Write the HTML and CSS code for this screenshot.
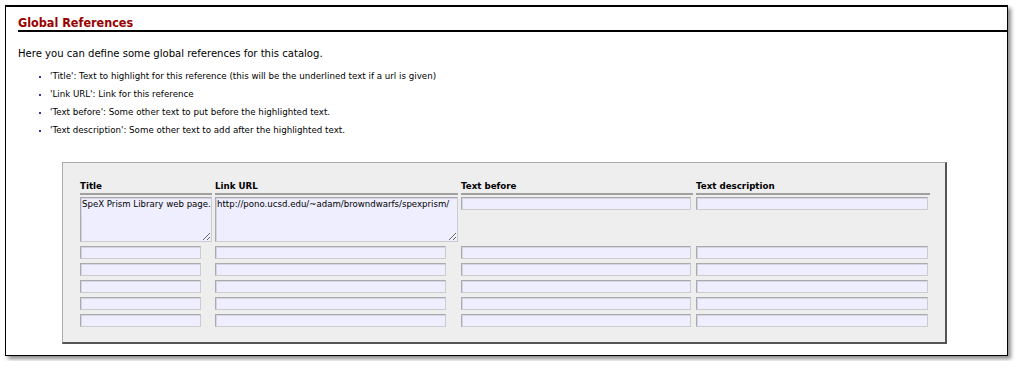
FILE: index.html
```html
<!DOCTYPE html>
<html lang="en">
<head>
    <meta charset="UTF-8">
    <title>Global References</title>
    <link rel="stylesheet" href="styles.css">
</head>
<body>
    <div class="frame">
        <h2 class="section-title">Global References</h2>
        <p class="intro">Here you can define some global references for this catalog.</p>
        <ul class="help-list">
            <li>'Title': Text to highlight for this reference (this will be the underlined text if a url is given)</li>
            <li>'Link URL': Link for this reference</li>
            <li>'Text before': Some other text to put before the highlighted text.</li>
            <li>'Text description': Some other text to add after the highlighted text.</li>
        </ul>
        <div class="ref-panel">
            <table class="ref-table">
                <thead>
                    <tr>
                        <th class="col-title">Title</th>
                        <th class="col-url">Link URL</th>
                        <th class="col-before">Text before</th>
                        <th class="col-desc">Text description</th>
                    </tr>
                </thead>
                <tbody>
                    <tr>
                        <td><textarea class="area-title" wrap="off">SpeX Prism Library web page.</textarea></td>
                        <td><textarea class="area-url" wrap="off">http://pono.ucsd.edu/~adam/browndwarfs/spexprism/</textarea></td>
                        <td><input class="in-before" type="text"></td>
                        <td><input class="in-desc" type="text"></td>
                    </tr>
                    <tr>
                        <td><input class="in-title" type="text"></td>
                        <td><input class="in-url" type="text"></td>
                        <td><input class="in-before" type="text"></td>
                        <td><input class="in-desc" type="text"></td>
                    </tr>
                    <tr>
                        <td><input class="in-title" type="text"></td>
                        <td><input class="in-url" type="text"></td>
                        <td><input class="in-before" type="text"></td>
                        <td><input class="in-desc" type="text"></td>
                    </tr>
                    <tr>
                        <td><input class="in-title" type="text"></td>
                        <td><input class="in-url" type="text"></td>
                        <td><input class="in-before" type="text"></td>
                        <td><input class="in-desc" type="text"></td>
                    </tr>
                    <tr>
                        <td><input class="in-title" type="text"></td>
                        <td><input class="in-url" type="text"></td>
                        <td><input class="in-before" type="text"></td>
                        <td><input class="in-desc" type="text"></td>
                    </tr>
                    <tr>
                        <td><input class="in-title" type="text"></td>
                        <td><input class="in-url" type="text"></td>
                        <td><input class="in-before" type="text"></td>
                        <td><input class="in-desc" type="text"></td>
                    </tr>
                </tbody>
            </table>
        </div>
    </div>
</body>
</html>
```

FILE: styles.css
```css
* {
    box-sizing: border-box;
}

body {
    margin: 0;
    padding: 5px;
    background: #fff;
    font-family: "DejaVu Sans", Verdana, sans-serif;
    color: #000;
}

.frame {
    width: 1003px;
    height: 351px;
    border: 1px solid #000;
    border-top-width: 2px;
    box-shadow: 3px 3px 4px rgba(0, 0, 0, 0.45);
    padding: 8px 0 0 12px;
}

.section-title {
    margin: 0;
    font-family: "DejaVu Sans Condensed", "DejaVu Sans", sans-serif;
    font-stretch: condensed;
    font-size: 12.5px;
    font-weight: bold;
    color: #990000;
    line-height: 15px;
    border-bottom: 2px solid #000;
}

.intro {
    margin: 15px 0 0;
    font-family: "DejaVu Sans Condensed", "DejaVu Sans", sans-serif;
    font-stretch: condensed;
    font-size: 11.2px;
    line-height: 14px;
}

.help-list {
    margin: 6px 0 0;
    padding-left: 32px;
    font-size: 8.7px;
    line-height: 18px;
    list-style-type: square;
}

.help-list li::marker {
    color: #333399;
    font-size: 6px;
}

.ref-panel {
    margin: 23px 0 0 44px;
    width: 885px;
    height: 182px;
    background: #eeeeee;
    border: 1px solid #aaaaaa;
    border-right: 2px solid #555555;
    border-bottom: 2px solid #555555;
    padding: 17px 0 0 14px;
}

.ref-table {
    border-collapse: separate;
    border-spacing: 3px 0;
    font-size: 9px;
}

.ref-table th {
    text-align: left;
    font-weight: bold;
    font-size: 8.7px;
    padding: 1px 0 1px;
    line-height: 11px;
    border-bottom: 2px solid #a0a0a0;
}

.ref-table td {
    padding: 2px 0;
    vertical-align: top;
}

.col-title { width: 132px; }
.col-url { width: 243px; }
.col-before { width: 232px; }
.col-desc { width: 234px; }

.ref-table input,
.ref-table textarea {
    display: block;
    margin: 0;
    background: #eeeeff;
    border: 1px solid #aaaaaa;
    border-bottom-color: #cccccc;
    border-right-color: #cccccc;
    box-shadow: inset 1px 1px 0 #d4d4e4;
    font-family: "DejaVu Sans", Verdana, sans-serif;
    font-size: 8.6px;
    color: #000;
    border-radius: 0;
}

.ref-table input {
    height: 13px;
    padding: 0 2px;
}

.ref-table textarea {
    height: 45px;
    padding: 1px 1px;
    line-height: 11px;
    resize: both;
    overflow: hidden;
}

.area-title { width: 132px; }
.area-url { width: 243px; }
.in-title { width: 121px; }
.in-url { width: 231px; }
.in-before { width: 230px; margin-left: 1px; }
.in-desc { width: 232px; margin-left: 1px; }
```
